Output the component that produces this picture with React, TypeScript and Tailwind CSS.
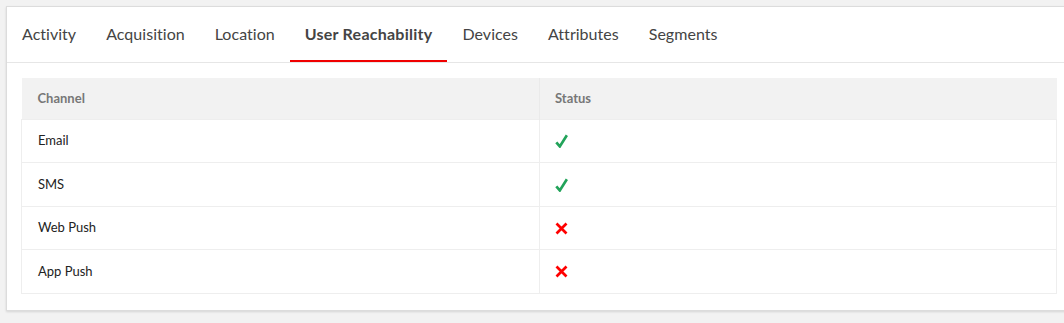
const tabs = ['Activity', 'Acquisition', 'Location', 'User Reachability', 'Devices', 'Attributes', 'Segments'];

const rows = [
  { channel: 'Email', ok: true },
  { channel: 'SMS', ok: true },
  { channel: 'Web Push', ok: false },
  { channel: 'App Push', ok: false },
];

function Check() {
  return (
    <svg width="13" height="14" viewBox="0 0 13 14">
      <path d="M1.3 8.3 L4.8 12.4 L11.9 1.3" fill="none" stroke="#22a35a" strokeWidth="2.7" strokeLinecap="butt" strokeLinejoin="miter" />
    </svg>
  );
}

function Cross() {
  return (
    <svg width="13" height="13" viewBox="0 0 13 13">
      <path d="M1.5 1.5 L11.5 11.5 M11.5 1.5 L1.5 11.5" fill="none" stroke="#ff0000" strokeWidth="2.7" />
    </svg>
  );
}

export default function App() {
  const active = 'User Reachability';

  return (
    <div className="min-h-screen bg-[#f2f2f2] pt-[6px] pl-[6px] font-['Lato','Liberation_Sans',sans-serif]">
      <div className="bg-white border border-[#dcdcdc] shadow-[0_1px_2px_rgba(0,0,0,0.12)] w-[1070px] h-[305px]">
        <nav className="flex h-[56px] border-b border-[#e6e6e6]">
          {tabs.map(t => (
            <div
              key={t}
              className={`px-[15px] flex items-center text-[16px] border-b-2 pt-[1px] ${
                t === active
                  ? 'border-[#f00000] font-bold text-[#444] tracking-[0.25px]'
                  : 'border-transparent text-[#444] tracking-[0.03px]'
              }`}
            >
              {t}
            </div>
          ))}
        </nav>

        <div className="pt-[15px] pl-[14px] pr-[14px]">
          <table className="w-[1036px] border-collapse text-[13px]">
            <thead>
              <tr className="bg-[#f2f2f2] h-[41px]">
                <th className="text-left font-bold text-[#777] pl-[16px] w-[518px] border-r border-[#eaeaea]">Channel</th>
                <th className="text-left font-bold text-[#777] pl-[15px]">Status</th>
              </tr>
            </thead>
            <tbody>
              {rows.map(r => (
                <tr key={r.channel} className="h-[43.5px] border border-[#eeeeee]">
                  <td className="pl-[16px] text-[#222] border-r border-[#eeeeee]">{r.channel}</td>
                  <td className="pl-[15px]">
                    <div className="flex items-center pt-[1px]">{r.ok ? <Check /> : <Cross />}</div>
                  </td>
                </tr>
              ))}
            </tbody>
          </table>
        </div>
      </div>
    </div>
  );
}
